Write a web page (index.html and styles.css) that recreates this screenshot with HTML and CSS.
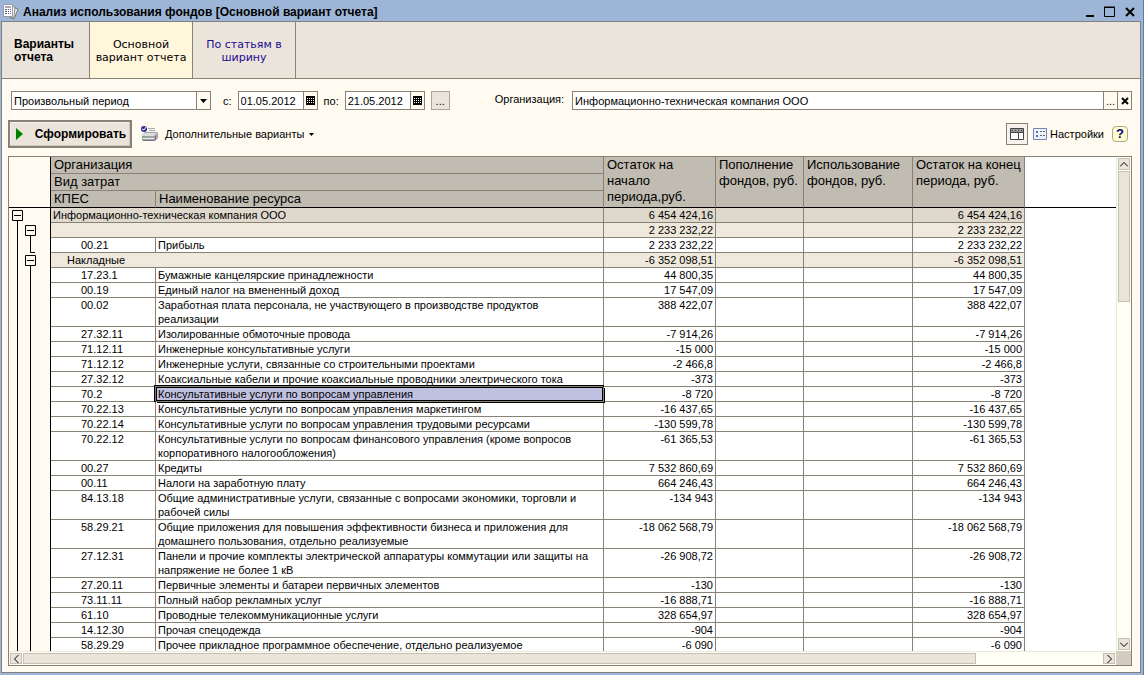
FILE: index.html
```html
<!DOCTYPE html>
<html lang="ru">
<head>
<meta charset="utf-8">
<title>Анализ использования фондов</title>
<link rel="stylesheet" href="styles.css">
</head>
<body>
<div class="window">
  <header class="titlebar">
    <svg class="app-icon" width="16" height="16" viewBox="0 0 16 16"><path d="M9 3l6 2-4 10-5-2z" fill="#eee" stroke="#777"/><path d="M8 2l4 1-1 10-4 1z" fill="#fff" stroke="#888"/><path d="M.5.500h9v12h-9z" fill="#fff" stroke="#99a"/><path d="M2 3h6M2 5.500h2M5 5.500h1M7 5.500h1M2 7.500h2M5 7.500h1M7 7.500h1M2 9.500h2M5 9.500h1M7 9.500h1" stroke="#557"/></svg>
    <h1 class="title">Анализ использования фондов [Основной вариант отчета]</h1>
    <button class="win-btn" aria-label="Свернуть"><svg width="12" height="12"><path d="M2 10h8" stroke="#000" stroke-width="2"/></svg></button>
    <button class="win-btn" aria-label="Развернуть"><svg width="12" height="12"><path d="M.5 1.500h10v9H.5zM0 1h11" fill="none" stroke="#000"/></svg></button>
    <button class="win-btn" aria-label="Закрыть"><svg width="12" height="12"><path d="M2 2l8 8M10 2l-8 8" stroke="#000" stroke-width="2"/></svg></button>
  </header>
  <main class="content">
    <nav class="tabs">
      <div class="tabs-label">Варианты отчета</div>
      <button class="tab tab-active">Основной вариант отчета</button>
      <button class="tab">По статьям в ширину</button>
    </nav>
    <form class="filters">
      <span class="field period">
        <input class="text" value="Произвольный период" aria-label="Период">
        <button type="button" class="field-btn" aria-label="Выбрать"><svg width="7" height="4"><path d="M0 0h7L3.500 4z"/></svg></button>
      </span>
      <label class="lbl-from" for="from">с:</label>
      <span class="field date">
        <input class="text" id="from" value="01.05.2012">
        <button type="button" class="field-btn" aria-label="Календарь"><svg width="9" height="9" shape-rendering="crispEdges"><path d="M0 0h9v9H0z"/><path d="M1 2h1v1H1zM3 2h1v1H3zM5 2h1v1H5zM7 2h1v1H7zM1 4h1v1H1zM3 4h1v1H3zM5 4h1v1H5zM7 4h1v1H7zM1 6h1v1H1zM3 6h1v1H3zM5 6h1v1H5zM7 6h1v1H7z" fill="#fff"/></svg></button>
      </span>
      <label class="lbl-to" for="to">по:</label>
      <span class="field date">
        <input class="text" id="to" value="21.05.2012">
        <button type="button" class="field-btn" aria-label="Календарь"><svg width="9" height="9" shape-rendering="crispEdges"><path d="M0 0h9v9H0z"/><path d="M1 2h1v1H1zM3 2h1v1H3zM5 2h1v1H5zM7 2h1v1H7zM1 4h1v1H1zM3 4h1v1H3zM5 4h1v1H5zM7 4h1v1H7zM1 6h1v1H1zM3 6h1v1H3zM5 6h1v1H5zM7 6h1v1H7z" fill="#fff"/></svg></button>
      </span>
      <button type="button" class="more">...</button>
      <label class="lbl-org" for="org">Организация:</label>
      <span class="field org">
        <input class="text" id="org" value="Информационно-техническая компания ООО">
        <button type="button" class="field-btn">...</button>
        <button type="button" class="field-btn" aria-label="Очистить"><svg width="8" height="8"><path d="M1 1l6 6M7 1L1 7" stroke="#000" stroke-width="2"/></svg></button>
      </span>
    </form>
    <div class="toolbar">
      <button class="run"><svg width="7" height="12"><path d="M0 0l7 6-7 6z" fill="#008000"/></svg>Сформировать</button>
      <button class="link-btn variants">
        <svg width="17" height="16" viewBox="0 0 17 16"><path d="M5 2h9l1 5H5z" fill="#f6f6f6"/><path d="M7 2.500h7M8 4.500h6" stroke="#aaa"/><path d="M1 9l3-3h12l1 1v5l-3 3H2l-1-1z" fill="#a4a4a8"/><path d="M1 9l3-2h12l-3 3H1z" fill="#dcdcdc"/><path d="M2 12.500h11" stroke="#eee"/><path d="M2 14.500h12M14.500 10v4" stroke="#77777c"/><path d="M2 10.500h2" stroke="#3c3"/><circle cx="3" cy="3" r="3" fill="#2b2b92"/><path d="M1 3l2 1 2-3" stroke="#fff" fill="none"/></svg>
        Дополнительные варианты
        <svg width="5" height="3"><path d="M0 0h5L2.500 3z"/></svg>
      </button>
      <button class="view" aria-label="Вид"><svg width="14" height="12"><path d="M.5.500h13v11H.5z" fill="#fff" stroke="#444"/><path d="M1 1h12v3H1z" fill="#999"/><path d="M0 4.500h14M8.500 4v8" stroke="#444"/><path d="M2 2.500h10" stroke="#444" stroke-dasharray="1 2"/></svg></button>
      <button class="link-btn settings">
        <svg width="14" height="12"><path d="M.5.500h13v11H.5z" fill="#eef1fb" stroke="#7086b8"/><path d="M3 3h2v2H3zM3 7h2v2H3z" fill="#5a6fb0"/><path d="M7 3.500h2M10 3.500h2M7 7.500h2M10 7.500h2" stroke="#666"/></svg>
        Настройки
      </button>
      <button class="help">?</button>
    </div>
    <section class="sheet">
      <div class="viewport">
        <div class="outline">
          <div class="outline-head"></div>
          <svg class="tree" width="41" height="444" fill="none" stroke="#000"><path d="M8.500 12v432M21.500 27v17.500H26M21.500 57v387"/><path d="M3.500 2.500h10v10h-10zM16.500 17.500h10v10h-10zM16.500 47.500h10v10h-10z" fill="#fffbf0"/><path d="M5 7.500h7M18 22.500h7M18 52.500h7"/></svg>
        </div>
        <table class="report">
          <colgroup><col class="c-code"><col class="c-name"><col class="c-sum"><col class="c-add"><col class="c-use"><col class="c-sum"><col></colgroup>
          <thead>
            <tr><th colspan="2">Организация</th><th class="tall" rowspan="3">Остаток на начало периода,руб.</th><th class="tall" rowspan="3">Пополнение фондов, руб.</th><th class="tall" rowspan="3">Использование фондов, руб.</th><th class="tall" rowspan="3">Остаток на конец периода, руб.</th><th class="rest tall" rowspan="3"></th></tr>
            <tr><th colspan="2">Вид затрат</th></tr>
            <tr class="last"><th>КПЕС</th><th>Наименование ресурса</th></tr>
          </thead>
          <tbody id="rows"></tbody>
        </table>
      </div>
      <div class="vbar"><button class="arrow" aria-label="Вверх"><svg width="8" height="5"><path d="M0 4.500l4-4 4 4" fill="none" stroke="#000"/></svg></button><div class="vthumb"></div><button class="arrow" aria-label="Вниз"><svg width="8" height="5"><path d="M0 .5l4 4 4-4" fill="none" stroke="#000"/></svg></button></div>
      <div class="hbar"><button class="arrow" aria-label="Влево"><svg width="5" height="8"><path d="M4.500 0l-4 4 4 4" fill="none" stroke="#000"/></svg></button><div class="hthumb"></div><button class="arrow" aria-label="Вправо"><svg width="5" height="8"><path d="M.5 0l4 4-4 4" fill="none" stroke="#000"/></svg></button></div>
      <div class="corner"></div>
    </section>
  </main>
</div>
<script src="rows.js"></script>
</body>
</html>
```
FILE: rows.js
```js
const groups = { total: 'g-total', group: 'g-group' };
const rows = [
  ['total', 'Информационно-техническая компания ООО', '6 454 424,16'],
  ['group', '', '2 233 232,22'],
  ['00.21', 'Прибыль', '2 233 232,22'],
  ['group', 'Накладные', '-6 352 098,51'],
  ['17.23.1', 'Бумажные канцелярские принадлежности', '44 800,35'],
  ['00.19', 'Единый налог на вмененный доход', '17 547,09'],
  ['00.02', 'Заработная плата персонала, не участвующего в производстве продуктов<br>реализации', '388 422,07'],
  ['27.32.11', 'Изолированные обмоточные провода', '-7 914,26'],
  ['71.12.11', 'Инженерные консультативные услуги', '-15 000'],
  ['71.12.12', 'Инженерные услуги, связанные со строительными проектами', '-2 466,8'],
  ['27.32.12', 'Коаксиальные кабели и прочие коаксиальные проводники электрического тока', '-373'],
  ['70.2', 'Консультативные услуги по вопросам управления', '-8 720', 'selected'],
  ['70.22.13', 'Консультативные услуги по вопросам управления маркетингом', '-16 437,65'],
  ['70.22.14', 'Консультативные услуги по вопросам управления трудовыми ресурсами', '-130 599,78'],
  ['70.22.12', 'Консультативные услуги по вопросам финансового управления (кроме вопросов<br>корпоративного налогообложения)', '-61 365,53'],
  ['00.27', 'Кредиты', '7 532 860,69'],
  ['00.11', 'Налоги на заработную плату', '664 246,43'],
  ['84.13.18', 'Общие административные услуги, связанные с вопросами экономики, торговли и<br>рабочей силы', '-134 943'],
  ['58.29.21', 'Общие приложения для повышения эффективности бизнеса и приложения для<br>домашнего пользования, отдельно реализуемые', '-18 062 568,79'],
  ['27.12.31', 'Панели и прочие комплекты электрической аппаратуры коммутации или защиты на<br>напряжение не более 1 кВ', '-26 908,72'],
  ['27.20.11', 'Первичные элементы и батареи первичных элементов', '-130'],
  ['73.11.11', 'Полный набор рекламных услуг', '-16 888,71'],
  ['61.10', 'Проводные телекоммуникационные услуги', '328 654,97'],
  ['14.12.30', 'Прочая спецодежда', '-904'],
  ['58.29.29', 'Прочее прикладное программное обеспечение, отдельно реализуемое', '-6 090']
];
document.getElementById('rows').innerHTML = rows.map(([code, name, sum, state]) => {
  const cls = groups[code];
  const head = cls
    ? `<td class="name" colspan="2">${name}</td>`
    : `<td class="code">${code}</td><td class="name ${state || ''}">${name}</td>`;
  return `<tr class="${cls || ''}">${head}<td class="num">${sum}</td><td></td><td></td><td class="num">${sum}</td><td class="rest"></td></tr>`;
}).join('');
```
FILE: styles.css
```css
* { box-sizing: border-box; }
body {
  margin: 0;
  font: 11px/14px "Liberation Sans", Arial, sans-serif;
  color: #000;
}
button, input { font: inherit; color: inherit; margin: 0; padding: 0; border-radius: 0; }
button { border: 0; background: none; display: flex; align-items: center; justify-content: center; }
svg { display: block; flex: none; }

.window {
  height: 100vh;
  display: flex;
  flex-direction: column;
  background: #9db6d7;
  padding: 0 2px 2px 1px;
  border-right: 1px solid #5f7ba3;
}
.titlebar { height: 21px; flex: none; display: flex; align-items: center; padding: 2px 1px 0 2px; }
.title { flex: 1; margin: 0 0 0 4px; font-size: 12px; line-height: 16px; font-weight: bold; }
.win-btn { width: 20px; height: 16px; }

.content {
  flex: 1;
  min-height: 0;
  display: flex;
  flex-direction: column;
  background: #fffbf0;
  border: 1px solid #808080;
}
.tabs {
  flex: none;
  display: flex;
  height: 57px;
  background: #ebe4da;
  border-bottom: 1px solid #868275;
  font: 11px/13px "DejaVu Sans", Verdana, sans-serif;
}
.tabs-label, .tab { border-right: 1px solid #868275; }
.tabs-label { width: 88px; padding: 16px 12px; font: bold 12px/13px "Liberation Sans", Arial, sans-serif; }
.tab { width: 103px; padding: 1px 4px 0; color: #1a0a96; }
.tab-active { background: #fff6db; color: #000; }

.filters { flex: none; display: flex; align-items: center; padding: 12px 8px 0 9px; }
.field { display: flex; height: 19px; border: 1px solid #868275; background: #fff; }
.text { flex: 1; min-width: 0; border: 0; padding: 0 2px; background: transparent; outline: 0; }
.field-btn { width: 14px; border-left: 1px solid #868275; background: #fffbf0; }
.period { width: 200px; }
.date { width: 80px; }
.lbl-from { margin: 0 6px 0 12px; }
.lbl-to { margin: 0 6px; }
.more { width: 19px; height: 19px; margin-left: 6px; background: #ebe4da; border: 1px solid #aaa59a; }
.lbl-org { margin: 0 8px 3px 45px; }
.org { flex: 1; }

.toolbar { flex: none; display: flex; align-items: center; padding: 10px 12px 8px 6px; }
.run {
  width: 124px;
  height: 28px;
  gap: 12px;
  padding-left: 2px;
  border: 2px solid #868275;
  background: #ebe4da;
  box-shadow: inset -1px -1px #cfc8bc, inset 1px 1px #f7f3ec;
  font-weight: bold;
  font-size: 12px;
}
.variants { margin-left: 9px; gap: 7px; }
.variants svg:last-child { margin-left: -2px; }
.view { width: 22px; height: 22px; margin: 0 5px 0 auto; border: 1px solid #868275; background: #f7f3ec; }
.settings { gap: 3px; }
.help {
  width: 16px;
  height: 16px;
  margin-left: 8px;
  border: 1px solid #a8a8a0;
  border-radius: 4px;
  background: #ffffc8;
  color: #000090;
  font-weight: bold;
  font-size: 13px;
}

.sheet {
  flex: 1;
  min-height: 0;
  margin: 0 8px 6px 6px;
  border: 1px solid #868275;
  display: grid;
  grid-template: minmax(0, 1fr) 14px / minmax(0, 1fr) 15px;
}
.viewport { display: flex; overflow: hidden; background: #fff; }
.outline { width: 42px; flex: none; background: #fffbf0; border-right: 1px solid #000; overflow: hidden; }
.outline-head { height: 51px; border-bottom: 1px solid #000; }
.report { flex: 1; align-self: flex-start; table-layout: fixed; border-collapse: separate; border-spacing: 0; width: 100%; }
.c-code { width: 105px; }
.c-name { width: 448px; }
.c-sum { width: 112px; }
.c-add { width: 88px; }
.c-use { width: 109px; }
th {
  height: 17px;
  padding: 0 3px;
  background: #c0bcb1;
  border-right: 1px solid #868275;
  border-bottom: 1px solid #868275;
  font-size: 13px;
  line-height: 16px;
  font-weight: normal;
  text-align: left;
  vertical-align: top;
  white-space: nowrap;
}
.tall { white-space: normal; }
.tall, .last th { border-bottom-color: #000; }
td {
  height: 15px;
  padding: 0 2px;
  border-right: 1px solid #868275;
  border-bottom: 1px solid #868275;
  vertical-align: top;
  white-space: nowrap;
}
.code { padding-left: 30px; }
.num { text-align: right; }
.g-total td { background: #dfd9cd; }
.g-group td { background: #efe8dc; }
.g-group .name { padding-left: 16px; }
.report .rest { background: #fff; border-right: 0; }
td.rest { border-bottom: 0; }
.selected {
  position: relative;
  background: #c0c0e0;
  box-shadow: inset 0 0 0 1px #000, -1px -1px #868275, -1px -1px 0 1px #000, 1px 1px #000;
}

.vbar { display: flex; flex-direction: column; border-left: 1px solid #ebe8de; background: #fffff4; padding: 1px; }
.hbar { display: flex; border-top: 1px solid #ebe8de; background: #fffff4; padding: 1px; }
.arrow { width: 12px; height: 12px; flex: none; background: #ebe4da; border: 1px solid #c6c0b4; }
.hbar .arrow { height: 11px; }
.vthumb { height: 131px; margin: 1px 0 auto; background: #ebe4da; border: 1px solid #c6c0b4; }
.hthumb { width: 953px; margin: 0 auto 0 1px; background: #ebe4da; border: 1px solid #c6c0b4; }
.corner { background: #d4ccc0; }
```
